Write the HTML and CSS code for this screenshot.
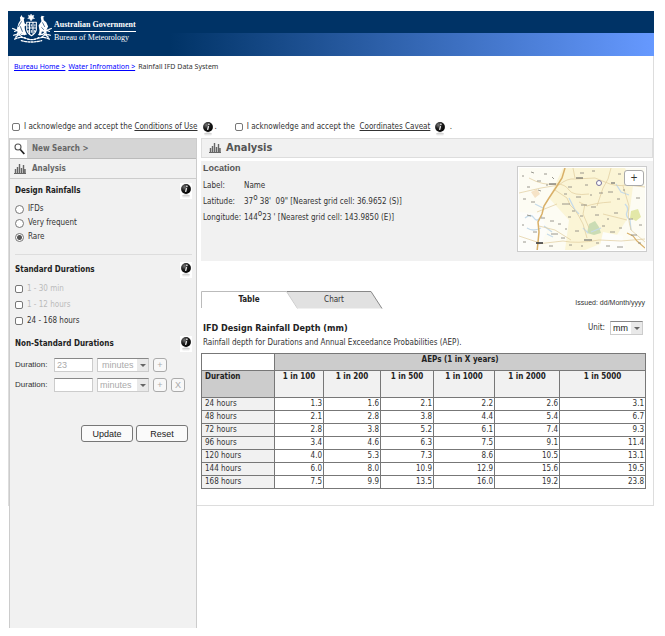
FILE: index.html
```html
<!DOCTYPE html>
<html lang="en">
<head>
<meta charset="utf-8">
<title>Rainfall IFD Data System</title>
<link rel="stylesheet" href="styles.css">
</head>
<body>
<svg class="defs" aria-hidden="true">
  <defs>
    <radialGradient id="orb" cx="35%" cy="30%" r="75%"><stop offset="0" stop-color="#777"/><stop offset=".5" stop-color="#1c1c1c"/><stop offset="1" stop-color="#000"/></radialGradient>
    <linearGradient id="fade" x1="0" y1="0" x2="0" y2="1"><stop offset="0" stop-color="#888" stop-opacity=".6"/><stop offset="1" stop-color="#ccc" stop-opacity="0"/></linearGradient>
    <symbol id="info" viewBox="0 0 12 16">
      <circle cx="6" cy="6" r="4.900" fill="url(#orb)"/>
      <circle cx="6.900" cy="3.300" r=".8" fill="#fff"/>
      <path d="M6.500 5.200L5.600 8.800" stroke="#fff" stroke-width="1.200" fill="none"/>
      <path d="M2 12.500Q6 10.500 10 12.500L9 15.500H3z" fill="url(#fade)"/>
    </symbol>
    <symbol id="bars" viewBox="0 0 12 12">
      <path d="M1.500 6v4M3.500 4v6M5.500 1v9M7.500 5v5M9.500 2v8M11 6v4" stroke="#666" stroke-width="1.400"/>
      <path d="M0 10.500h12" stroke="#666"/>
    </symbol>
  </defs>
</svg>
<div class="frame">
  <header class="banner">
    <svg class="crest" viewBox="0 0 40 30" aria-hidden="true">
      <g fill="none" stroke="#fff" stroke-linecap="round" stroke-linejoin="round">
        <path d="M19 0l1 1.800 2-.5-.8 2 1.500 1.300-2.200.4L19 7.200l-1.300-2.200-2.200-.4L17 3.300l-.8-2 2 .5z" fill="#fff" stroke-width=".5"/>
        <path d="M14.500 8.500h10v8q-1 4-5 6-4-2-5-6zM17.500 9v11M21 9v11M14.500 14.500h10" stroke-width="1.100"/>
        <path d="M16 11v1.500M19.300 11v1.500M23 11v1.500M16 17v1.500M19.300 17v2M22.800 17v1.500" stroke-width="1"/>
        <path d="M7.500 3.500L9.500 1l.5 2 2.500.8-1 2 .8 3.700 2.200 2-2.200 1.500.5 4 2 4.500-4-.5-2.500-1-5 1.500L5 19l-.5-4L6 9.500l2-3z" fill="#fff" stroke="none"/>
        <path d="M33 2.500l-3-.8-1 1.800.8 4-3 4.500 1 5-1 5h2.400l1-4 3 .5 1 3.500 1.200-.5-.7-4.500 2-4-2-4.500-2.500-2-.5-3z" fill="#fff" stroke="none"/>
        <path d="M2 18q3-2 5 1t6 2M1 22q5-2 9 2M0 15l5 2M2 26q6-3 11-1M38 18q-3-2-5 1t-6 2M39 22q-5-2-9 2M40 15l-5 2M38 26q-6-3-11-1M3 24l5-4M37 24l-5-4" stroke-width="1.300" stroke-dasharray="2.500 1.200"/>
        <path d="M9 8l-3 5M8 13l2 5M31 9l2 4M30 14l2 2" stroke="#036" stroke-width=".7"/>
        <path d="M9 27.500q10 3 21 0M12 24.500q8 4 15 0" stroke-width="1.400" stroke-dasharray="2 1.400"/>
      </g>
    </svg>
    <div class="agency"><span class="gov">Australian Government</span><span class="bureau">Bureau of Meteorology</span></div>
  </header>
  <nav class="crumbs" aria-label="Breadcrumb"><a href="#">Bureau Home &gt;</a><a href="#">Water Infromation &gt;</a><span>Rainfall IFD Data System</span></nav>
  <div class="acks">
    <div class="ack"><input type="checkbox" id="cond"><label for="cond">I acknowledge and accept the <a href="#">Conditions of Use</a></label><svg class="info"><use href="#info"/></svg><span>.</span></div>
    <div class="ack"><input type="checkbox" id="coord"><label for="coord">I acknowledge and accept the&nbsp; <a href="#">Coordinates Caveat</a></label><svg class="info"><use href="#info"/></svg><span>&nbsp;.</span></div>
  </div>
  <div class="columns">
    <aside class="sidebar">
      <button class="side-head search" type="button"><span class="lens"><svg viewBox="0 0 16 18" aria-hidden="true"><circle cx="8" cy="7" r="3" fill="#fff" stroke="#555" stroke-width="1.100"/><path d="M10.300 9.500l4 4.500" stroke="#222" stroke-width="1.700"/></svg></span>New Search &gt;</button>
      <h2 class="side-head sub"><svg class="bars"><use href="#bars"/></svg>Analysis</h2>
      <section class="group rule">
        <div class="group-title"><h3>Design Rainfalls</h3><svg class="info boxed"><use href="#info"/></svg></div>
        <div class="choices radios">
          <label><input type="radio" name="design">IFDs</label>
          <label><input type="radio" name="design">Very frequent</label>
          <label><input type="radio" name="design" checked>Rare</label>
        </div>
      </section>
      <section class="group">
        <div class="group-title"><h3>Standard Durations</h3><svg class="info boxed"><use href="#info"/></svg></div>
        <div class="choices checks">
          <label class="off"><input type="checkbox" disabled>1 - 30 min</label>
          <label class="off"><input type="checkbox" disabled>1 - 12 hours</label>
          <label><input type="checkbox">24 - 168 hours</label>
        </div>
      </section>
      <section class="group">
        <div class="group-title"><h3>Non-Standard Durations</h3><svg class="info boxed"><use href="#info"/></svg></div>
        <div class="durations">
          <div class="duration"><label for="d1">Duration:</label><input type="text" id="d1" value="23"><span class="pick"><select class="inset" aria-label="Duration unit"><option>minutes</option></select></span><button type="button">+</button></div>
          <div class="duration"><label for="d2">Duration:</label><input type="text" id="d2"><span class="pick"><select aria-label="Second duration unit"><option>minutes</option></select></span><button type="button">+</button><button type="button">X</button></div>
        </div>
        <div class="actions"><button type="button">Update</button><button type="button">Reset</button></div>
      </section>
    </aside>
    <main class="main">
      <h1 class="main-head"><svg class="bars"><use href="#bars"/></svg>Analysis</h1>
      <section class="location">
        <div class="place">
          <h2>Location</h2>
          <dl>
            <dt>Label:</dt><dd>Name</dd>
            <dt>Latitude:</dt><dd>37<sup>o</sup> 38' &nbsp;09" [Nearest grid cell: 36.9652 (S)]</dd>
            <dt>Longitude:</dt><dd>144<sup>o</sup>23 ' [Nearest grid cell: 143.9850 (E)]</dd>
          </dl>
        </div>
        <div class="map">
          <svg viewBox="0 0 126 82" preserveAspectRatio="none" aria-hidden="true">
            <rect width="126" height="82" fill="#fdfcf3"/>
            <path d="M44 0h62l8 18-4 30-14 22-30 12H46l4-30-20-22z" fill="#fbf5d6"/>
            <path d="M0 44l22 2 6 16-8 20H0zM84 64l20 4 2 14H80z" fill="#fdfdfa"/>
            <path d="M70 56l6-3 4 6 2 6-7 2-7-2z" fill="#cbdcb4"/><path d="M112 43l7-2 3 8-5 4-6-3z" fill="#e3e8a8"/>
            <path d="M12 24l6-3 3 5-5 4z" fill="#f6e3c6"/>
            <g fill="none" stroke="#c6dbea" stroke-width="1.300"><path d="M6 50q6-5 9 0t8-2M8 60q6 4 14 0M25 58l8 6M97 16l5 8 8 3M106 36q4 4 2 8t3 8l1 10M50 30l6 12 4 4M16 36l8 4M72 64l10-4M28 66l6 3M64 60l5 5"/></g>
            <g fill="none" stroke="#dfcb9c" stroke-width=".7"><path d="M40 17q8-7 16-6l20-1 10 4q10 5 22 3l18 2M10 10q14 8 28 6 8 0 12 6t20 4M40 17L22 20 0 25M36 22l12 8q2 8 8 12 4 6 8 14l4 14M18 76l26-3q14 3 36-1l22 1 24-2M60 34l8 4q8-3 24-4M66 36l-2 10 6 14M92 0q-2 12-8 20l-6 18M18 44l20-8M104 18l6 20q-2 10 2 24l14 12M0 68l18 6M54 0l2 10M20 58l16 4 16 10M84 46l24 6"/></g>
            <path d="M46 0l-3 10-5 8-8 12-5 8-2 8-4 8 1 10-2 20" fill="none" stroke="#d9b068" stroke-width="1.500"/>
            <path d="M108 65l6 3 4 5 8 7" fill="none" stroke="#d9b068" stroke-width="1.100"/>
            <path d="M3 8h2M12 4l3 1M18 13h4M25 6h3M33 9l2 2M61 5h4M73 3h3M99 6h3M8 19h3M19 22l3 1M27 17h2M49 19h4M66 17h3M89 24h5M104 22h2M117 30h4M4 31h3M12 34h4M45 26h3M57 29h5M71 27h2M80 25h4M98 31h3M62 37h6M72 39h5M43 36h8M53 43h3M22 50h4M8 47l4 1M3 57h2M31 53h4M39 56h3M49 49h3M61 48h3M76 47h4M88 51h2M95 45h4M110 51h4M120 57h3M14 64h4M32 66h7M46 61h2M56 63h4M83 58h3M91 64h5M100 60h3M112 67h6M4 74h3M30 78h4M42 70h4M50 77h3M62 78h2M77 75h3M87 78h4M98 79h6M119 75h3" stroke="#8f8d84" stroke-width=".9"/>
            <path d="M30 16h7M57 10h7M65 72h8M92 15h4" stroke="#555" stroke-width="1.100"/><path d="M17 75h7" stroke="#444" stroke-width="1.700"/>
            <circle cx="80" cy="15" r="2.500" fill="#fff" stroke="#77709a"/>
          </svg>
          <button type="button" aria-label="Zoom in">+</button>
        </div>
      </section>
      <div class="tabs-row">
        <div class="tabs" role="tablist">
          <svg class="tab-shape" viewBox="0 0 182 18" preserveAspectRatio="none" aria-hidden="true"><path d="M85.500 .5h84.500l11 17H97z" fill="#e1e1e1"/><path d="M85.500.5H170l11 17" fill="none" stroke="#888"/><path d="M.5 17V.5h85" fill="none" stroke="#bbb"/><path d="M85.500.5l11 17" stroke="#ccc"/></svg>
          <button type="button" role="tab" aria-selected="true">Table</button><button type="button" role="tab" aria-selected="false">Chart</button>
        </div>
        <span class="issued">Issued: dd/Month/yyyy</span>
      </div>
      <div class="result-head">
        <h2>IFD Design Rainfall Depth (mm)</h2>
        <div class="unit"><label for="unit">Unit:</label><span class="pick"><select id="unit"><option>mm</option></select></span></div>
      </div>
      <p class="note">Rainfall depth for Durations and Annual Exceedance Probabilities (AEP).</p>
      <table>
        <colgroup><col class="c0"><col class="c1"><col class="c2"><col class="c3"><col class="c4"><col class="c5"><col class="c6"></colgroup>
        <thead>
          <tr class="span"><td></td><th colspan="6">AEPs (1 in X years)</th></tr>
          <tr class="heads"><th class="dur">Duration</th><th>1 in 100</th><th>1 in 200</th><th>1 in 500</th><th>1 in 1000</th><th>1 in 2000</th><th>1 in 5000</th></tr>
        </thead>
        <tbody>
          <tr><th>24 hours</th><td>1.3</td><td>1.6</td><td>2.1</td><td>2.2</td><td>2.6</td><td>3.1</td></tr>
          <tr><th>48 hours</th><td>2.1</td><td>2.8</td><td>3.8</td><td>4.4</td><td>5.4</td><td>6.7</td></tr>
          <tr><th>72 hours</th><td>2.8</td><td>3.8</td><td>5.2</td><td>6.1</td><td>7.4</td><td>9.3</td></tr>
          <tr><th>96 hours</th><td>3.4</td><td>4.6</td><td>6.3</td><td>7.5</td><td>9.1</td><td>11.4</td></tr>
          <tr><th>120 hours</th><td>4.0</td><td>5.3</td><td>7.3</td><td>8.6</td><td>10.5</td><td>13.1</td></tr>
          <tr><th>144 hours</th><td>6.0</td><td>8.0</td><td>10.9</td><td>12.9</td><td>15.6</td><td>19.5</td></tr>
          <tr><th>168 hours</th><td>7.5</td><td>9.9</td><td>13.5</td><td>16.0</td><td>19.2</td><td>23.8</td></tr>
        </tbody>
      </table>
    </main>
  </div>
</div>
</body>
</html>
```
FILE: styles.css
```css
* { box-sizing: border-box; }
body { margin: 0; padding: 11px 11px 8px 8px; background: #fff; color: #333; font: 8px/12px "DejaVu Sans Condensed", "DejaVu Sans", sans-serif; }
h1, h2, h3, p, dl, dd { margin: 0; }
button, input, select { font: inherit; color: inherit; margin: 0; }
.defs { position: absolute; width: 0; height: 0; }
.frame { border: 1px solid #ddd; border-top: 0; margin-bottom: 123px; }

.banner { height: 45px; margin: 0 -1px; padding: 3px 4px 0; display: flex; gap: 2px; background: linear-gradient(#036 22px, transparent 22px), linear-gradient(90deg, #036 25%, #69f); color: #fff; font-family: "Liberation Serif", serif; font-weight: bold; }
.crest { width: 40px; height: 29px; }
.agency { padding-top: 5px; line-height: 12px; }
.agency span { display: block; }
.gov { border-bottom: 1px solid #fff; }
.bureau { font-weight: normal; }

.crumbs { display: flex; gap: 3px; padding: 5px 5px 3px; font-family: "Noto Sans", sans-serif; font-size: 7px; }
.crumbs a { color: #00f; }
.acks { display: flex; gap: 18px; padding: 43px 3px 0; height: 62px; }
.ack { display: flex; align-items: center; height: 16px; gap: 4px; }
.ack a { color: inherit; }
.ack .info { margin: 4px -3px 0 0; }
.info { width: 12px; height: 16px; }
.bars { width: 12px; height: 12px; }
input[type="checkbox"], input[type="radio"] { appearance: none; width: 8px; height: 8px; border: 1px solid #777; border-radius: 2px; background: #fff; flex: none; }
input[type="radio"] { width: 9px; height: 9px; border-radius: 50%; }
input[type="radio"]:checked { background: radial-gradient(circle, #555 2px, #fff 3px); }

.columns { display: grid; grid-template-columns: 188px minmax(0, 1fr); gap: 4px; }
.sidebar { height: 490px; margin-bottom: -123px; border: 1px solid #ccc; border-bottom: 0; background: #f1f1f1; }
.side-head { width: 100%; height: 20px; display: flex; align-items: center; padding: 0; border: 0; border-bottom: 1px solid #ccc; font: bold 8px/12px "DejaVu Sans Condensed", sans-serif; color: #666; text-align: left; }
.search { background: #d5d5d5; gap: 5px; border-color: #bbb; }
.lens { width: 17px; height: 18px; background: #fff; }
.lens svg { width: 16px; height: 18px; }
.sub { gap: 6px; padding-left: 4px; }
.group { margin: 0 4px 0 5px; }
.group.rule { height: 76px; border-bottom: 1px solid #ddd; margin-bottom: 3px; }
.group-title { display: flex; justify-content: space-between; align-items: center; height: 22px; padding-top: 1px; }
.group h3 { font-size: 8px; line-height: 12px; color: #222; }
.boxed { background: #fff; }
.choices { display: flex; flex-direction: column; }
.choices label { display: flex; align-items: center; gap: 4px; height: 14px; }
.radios { padding-top: 1px; }
.checks { height: 52px; padding-top: 1px; }
.checks label { height: 16px; }
.off { color: #bbb; }
.durations { padding-top: 3px; display: grid; gap: 4px; }
.duration { display: flex; align-items: center; gap: 4px; height: 16px; font-family: "Liberation Sans", sans-serif; font-size: 9px; }
.duration label { width: 35px; font-size: 8px; }
.duration input { width: 39px; height: 14px; padding: 0 2px; border: 1px solid #ccc; border-top-color: #888; color: #aaa; }
.pick { position: relative; display: block; }
.pick select { display: block; appearance: none; width: 52px; height: 14px; padding: 0 2px; border: 1px solid #ccc; border-top-color: #888; border-radius: 0; background: #fff linear-gradient(#e9e9e9, #e9e9e9) right / 11px 100% no-repeat; color: #aaa; }
.pick .inset { padding-left: 4px; }
.pick::after { content: ""; position: absolute; right: 3px; top: 6px; border: 3px solid transparent; border-top-color: #666; pointer-events: none; }
.duration button { width: 14px; height: 14px; padding: 0; border: 1px solid #aaa; border-radius: 3px; background: #f8f8f8; color: #aaa; line-height: 11px; }
.actions { display: flex; justify-content: flex-end; gap: 3px; padding: 32px 4px 0 0; }
.actions button { width: 52px; height: 17px; padding: 0; border: 1px solid #777; border-radius: 3px; background: #fafafa; font: 9px/12px "Liberation Sans", sans-serif; color: #222; }

.main { padding-bottom: 16px; }
.main-head { height: 20px; display: flex; align-items: center; gap: 5px; padding-left: 7px; border: 1px solid #ddd; background: #f1f1f1; font-size: 11px; line-height: 14px; color: #555; }
.location { display: flex; justify-content: space-between; margin-top: 3px; height: 100px; padding: 0 6px 0 2px; background: #f1f1f1; }
.location h2 { font: bold 9px/14px "Liberation Sans", sans-serif; color: #555; }
.place dl { display: grid; grid-template-columns: 41px auto; line-height: 16px; padding-top: 3px; }
.place sup { font-size: 8px; line-height: 0; }
.map { position: relative; width: 130px; height: 86px; margin-top: 5px; border: 1px solid #ccc; padding: 1px; background: #fff; }
.map svg { display: block; width: 100%; height: 100%; }
.map button { position: absolute; top: 3px; right: 2px; width: 20px; height: 16px; padding: 0; border: 1px solid #aaa; border-radius: 3px; background: #fff; font-size: 10px; line-height: 12px; }
.tabs-row { display: flex; justify-content: space-between; margin: 30px 8px 0 0; }
.tabs { position: relative; display: flex; width: 182px; height: 18px; }
.tab-shape { position: absolute; inset: 0; width: 100%; height: 100%; }
.tabs button { position: relative; width: 96px; border: 0; padding: 0; background: none; }
.tabs button + button { width: 74px; }
.tabs [aria-selected="true"] { font-weight: bold; color: #222; }
.issued { padding-top: 6px; font-family: "Liberation Sans", sans-serif; font-size: 7px; }
.result-head { display: flex; justify-content: space-between; align-items: center; height: 26px; margin-top: 6px; padding: 0 10px 0 2px; }
.result-head h2 { font-size: 9px; line-height: 12px; color: #222; }
.unit { display: flex; align-items: center; gap: 5px; }
.unit select { width: 33px; color: #222; font: 9px/12px "Liberation Sans", sans-serif; }
.note { padding: 0 2px; margin-top: -4px; }
table { width: calc(100% - 8px); margin-top: 4px; border-collapse: collapse; table-layout: fixed; line-height: 10px; }
th, td { height: 13px; padding: 0 1px; border: 1px solid #777; text-align: right; vertical-align: top; }
tbody { line-height: 12px; }
tbody th { background: #f1f1f1; font-weight: normal; text-align: left; padding-left: 3px; }
thead th { padding-top: 1px; text-align: center; background: #f1f1f1; color: #222; }
.span th, .heads .dur { background: #ccc; }
.span th, .span td { height: 17px; }
.heads th { height: 27px; }
.heads .dur { text-align: left; padding-left: 3px; }
.c0 { width: 73px; } .c1 { width: 49px; } .c2 { width: 57px; } .c3 { width: 53px; } .c4 { width: 61px; } .c5 { width: 65px; } .c6 { width: 86px; }
```
